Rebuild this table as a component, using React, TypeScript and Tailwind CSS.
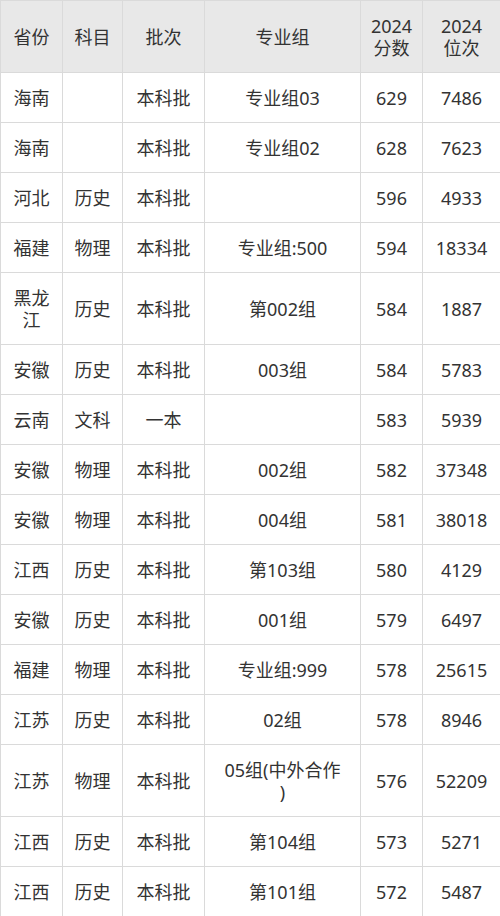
import React from "react";

type Row = { p: React.ReactNode; s: string; b: string; g: React.ReactNode; score: string; rank: string; tall?: boolean };

const rows: Row[] = [
  { p: "海南", s: "", b: "本科批", g: "专业组03", score: "629", rank: "7486" },
  { p: "海南", s: "", b: "本科批", g: "专业组02", score: "628", rank: "7623" },
  { p: "河北", s: "历史", b: "本科批", g: "", score: "596", rank: "4933" },
  { p: "福建", s: "物理", b: "本科批", g: "专业组:500", score: "594", rank: "18334" },
  { p: <>黑龙<br />江</>, s: "历史", b: "本科批", g: "第002组", score: "584", rank: "1887", tall: true },
  { p: "安徽", s: "历史", b: "本科批", g: "003组", score: "584", rank: "5783" },
  { p: "云南", s: "文科", b: "一本", g: "", score: "583", rank: "5939" },
  { p: "安徽", s: "物理", b: "本科批", g: "002组", score: "582", rank: "37348" },
  { p: "安徽", s: "物理", b: "本科批", g: "004组", score: "581", rank: "38018" },
  { p: "江西", s: "历史", b: "本科批", g: "第103组", score: "580", rank: "4129" },
  { p: "安徽", s: "历史", b: "本科批", g: "001组", score: "579", rank: "6497" },
  { p: "福建", s: "物理", b: "本科批", g: "专业组:999", score: "578", rank: "25615" },
  { p: "江苏", s: "历史", b: "本科批", g: "02组", score: "578", rank: "8946" },
  { p: "江苏", s: "物理", b: "本科批", g: <>05组(中外合作<br />)</>, score: "576", rank: "52209", tall: true },
  { p: "江西", s: "历史", b: "本科批", g: "第104组", score: "573", rank: "5271" },
  { p: "江西", s: "历史", b: "本科批", g: "第101组", score: "572", rank: "5487" },
];

const cell = "border border-[#dadada] text-center align-middle px-1 py-0 leading-[22px]";

export default function App() {
  return (
    <div
      className="w-[500px] h-[916px] bg-white text-[#333333] text-[18px] overflow-hidden"
      style={{ fontFamily: '"Noto Sans", "Noto Sans CJK SC", sans-serif' }}
    >
      <table className="w-[500px] table-fixed border-collapse">
        <colgroup>
          <col className="w-[62px]" />
          <col className="w-[60px]" />
          <col className="w-[82px]" />
          <col className="w-[156px]" />
          <col className="w-[62px]" />
          <col className="w-[78px]" />
        </colgroup>
        <thead>
          <tr className="h-[72px] bg-[#e8e8e8]">
            <th className={cell + " font-normal"}>省份</th>
            <th className={cell + " font-normal"}>科目</th>
            <th className={cell + " font-normal"}>批次</th>
            <th className={cell + " font-normal"}>专业组</th>
            <th className={cell + " font-normal"}>2024<br />分数</th>
            <th className={cell + " font-normal"}>2024<br />位次</th>
          </tr>
        </thead>
        <tbody>
          {rows.map((r, i) => (
            <tr key={i} className={r.tall ? "h-[72px]" : "h-[50px]"}>
              <td className={cell}>{r.p}</td>
              <td className={cell}>{r.s}</td>
              <td className={cell}>{r.b}</td>
              <td className={cell}>{r.g}</td>
              <td className={cell}>{r.score}</td>
              <td className={cell}>{r.rank}</td>
            </tr>
          ))}
        </tbody>
      </table>
    </div>
  );
}
